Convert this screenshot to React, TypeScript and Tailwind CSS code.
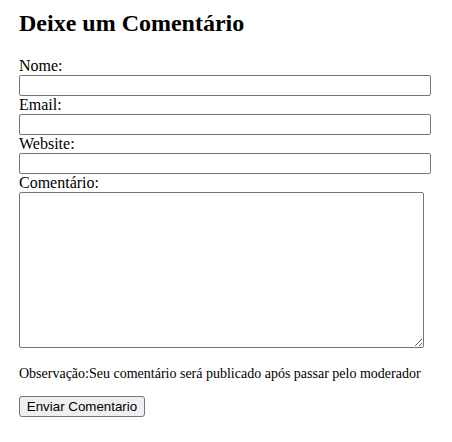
import React from 'react';

const App: React.FC = () => {
  return (
    <div className="min-h-[442px] bg-white pl-[19px] pt-[10px] font-['Liberation_Serif','Times_New_Roman',serif] text-black">
      <h2 className="mb-[20px] text-[24px] leading-[27px] font-bold">Deixe um Comentário</h2>
      <form className="flex flex-col items-start" onSubmit={(e) => e.preventDefault()}>
        <label className="h-[18px] text-[16px] leading-[18px]">Nome:</label>
        <input
          type="text"
          className="h-[21px] w-[412px] rounded-[2px] border border-[#767676] bg-white px-[2px] text-[13.33px] outline-none"
        />
        <label className="h-[18px] text-[16px] leading-[18px]">Email:</label>
        <input
          type="email"
          className="h-[21px] w-[412px] rounded-[2px] border border-[#767676] bg-white px-[2px] text-[13.33px] outline-none"
        />
        <label className="h-[18px] text-[16px] leading-[18px]">Website:</label>
        <input
          type="text"
          className="h-[21px] w-[412px] rounded-[2px] border border-[#767676] bg-white px-[2px] text-[13.33px] outline-none"
        />
        <label className="h-[18px] text-[16px] leading-[18px]">Comentário:</label>
        <textarea className="block h-[156px] w-[405px] resize rounded-[2px] border border-[#767676] bg-white p-[2px] font-['Liberation_Mono',monospace] text-[13.33px] outline-none" />
        <p className="mt-[18px] mb-[14px] h-[16px] whitespace-nowrap text-[14px] leading-[16px]">
          Observação:Seu comentário será publicado após passar pelo moderador
        </p>
        <button
          type="submit"
          className="flex h-[21px] w-[126px] items-center justify-center rounded-[3px] border border-[#767676] bg-[#efefef] font-['Liberation_Sans',Arial,sans-serif] text-[13.33px] text-black"
        >
          Enviar Comentario
        </button>
      </form>
    </div>
  );
};

export default App;
